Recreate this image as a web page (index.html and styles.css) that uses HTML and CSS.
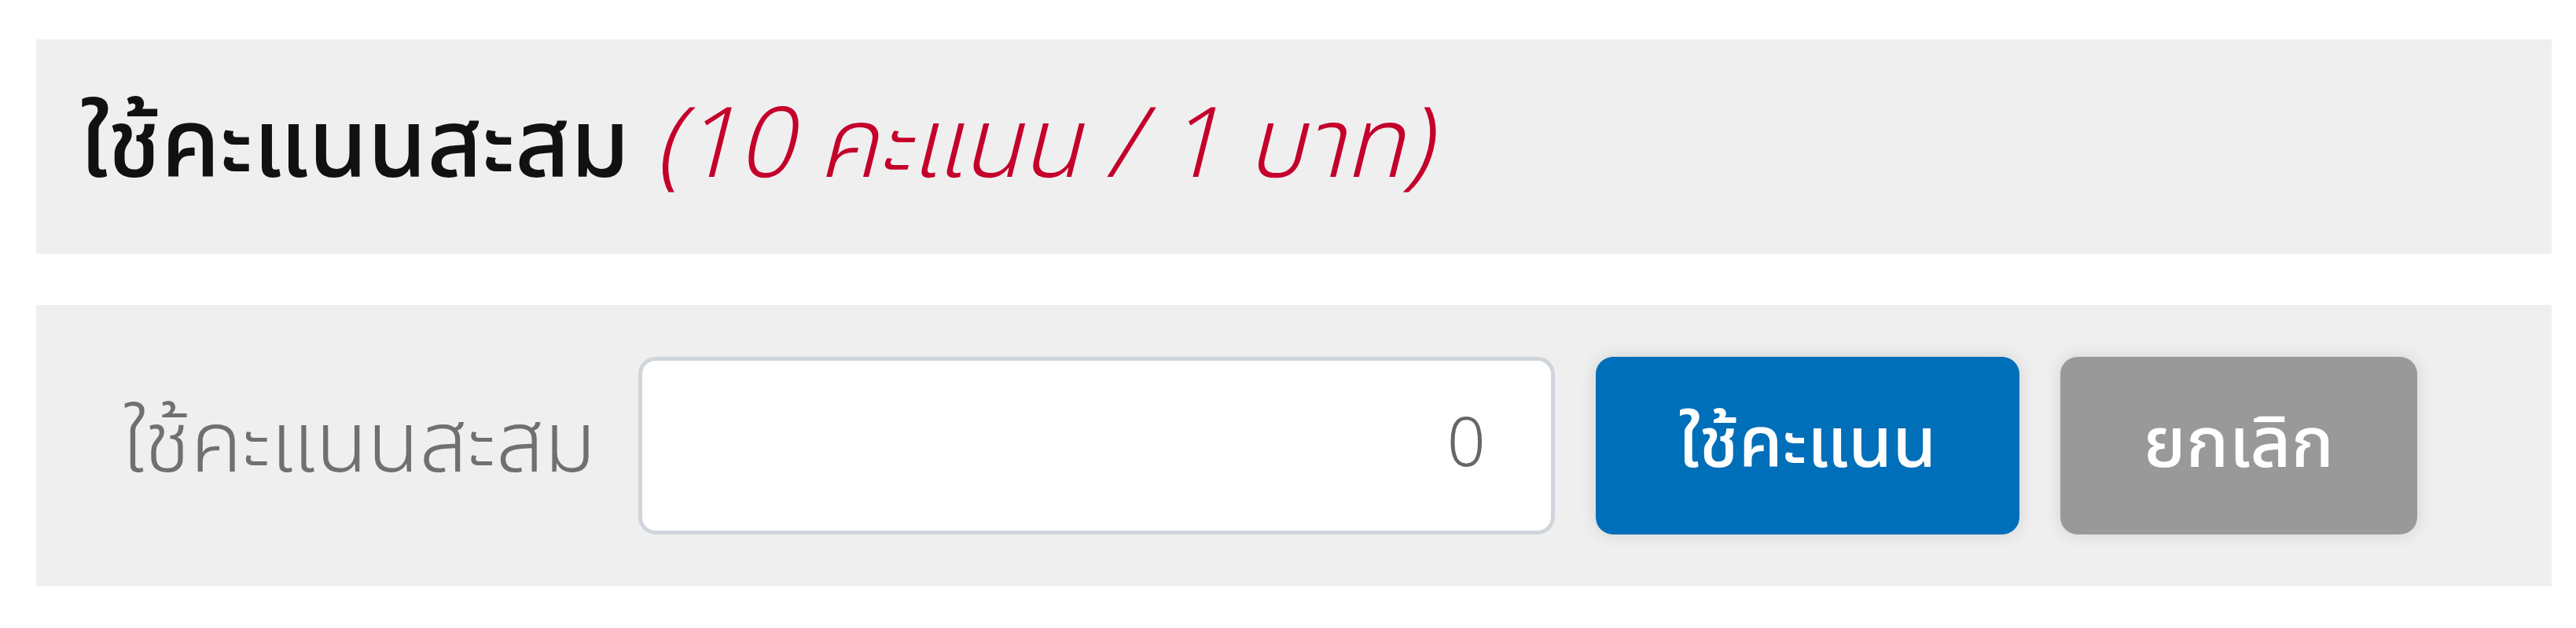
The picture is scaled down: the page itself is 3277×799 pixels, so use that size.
FILE: index.html
```html
<!DOCTYPE html>
<html lang="th">
<head>
<meta charset="utf-8">
<title>ใช้คะแนนสะสม</title>
<link rel="stylesheet" href="styles.css">
</head>
<body>
<div class="page">
  <div class="panel-head">
    <h2 class="title">ใช้คะแนนสะสม <span class="rate">(10 คะแนน / 1 บาท)</span></h2>
  </div>
  <div class="panel-body">
    <label class="label" for="points">ใช้คะแนนสะสม</label>
    <input id="points" class="points" type="text" value="0">
    <button class="btn btn-primary" type="button">ใช้คะแนน</button>
    <button class="btn btn-cancel" type="button">ยกเลิก</button>
  </div>
</div>
</body>
</html>
```
FILE: styles.css
```css
html, body {
  margin: 0;
  padding: 0;
  background: #ffffff;
}
body {
  font-family: "Noto Sans Thai", "Noto Sans Thai UI", "Noto Sans", "DejaVu Sans", sans-serif;
}
.page {
  display: flex;
  flex-direction: column;
  gap: 65px;
  padding: 50px 31px 0 46px;
}
.panel-head {
  background: #efefef;
  height: 273px;
  display: flex;
  align-items: center;
  padding-left: 56px;
}
.title {
  margin: 0;
  font-size: 121px;
  font-weight: 500;
  color: #111111;
  line-height: 1;
  white-space: nowrap;
}
.rate {
  color: #c4002b;
  font-style: italic;
  font-weight: 300;
  font-size: 124px;
}
.panel-body {
  background: #efefef;
  height: 358px;
  display: flex;
  align-items: center;
  padding-left: 110px;
}
.label {
  font-size: 108px;
  font-weight: 300;
  color: #707070;
  margin-right: 54px;
  white-space: nowrap;
  line-height: 1;
}
.points {
  box-sizing: border-box;
  width: 1166px;
  height: 226px;
  border: 5px solid #d0d5dc;
  border-radius: 22px;
  background: #ffffff;
  text-align: right;
  padding: 0 83px 0 20px;
  font-family: inherit;
  font-size: 86px;
  font-weight: 300;
  color: #666666;
  outline: none;
}
.btn {
  box-sizing: border-box;
  height: 226px;
  margin-left: 52px;
  border: none;
  border-radius: 22px;
  color: #ffffff;
  font-family: inherit;
  font-size: 90px;
  font-weight: 500;
  box-shadow: 0 0 22px rgba(0, 0, 0, 0.12);
  padding: 0;
}
.btn-primary {
  width: 539px;
  background: #006fb9;
}
.btn-cancel {
  width: 454px;
  background: #999999;
}
```
